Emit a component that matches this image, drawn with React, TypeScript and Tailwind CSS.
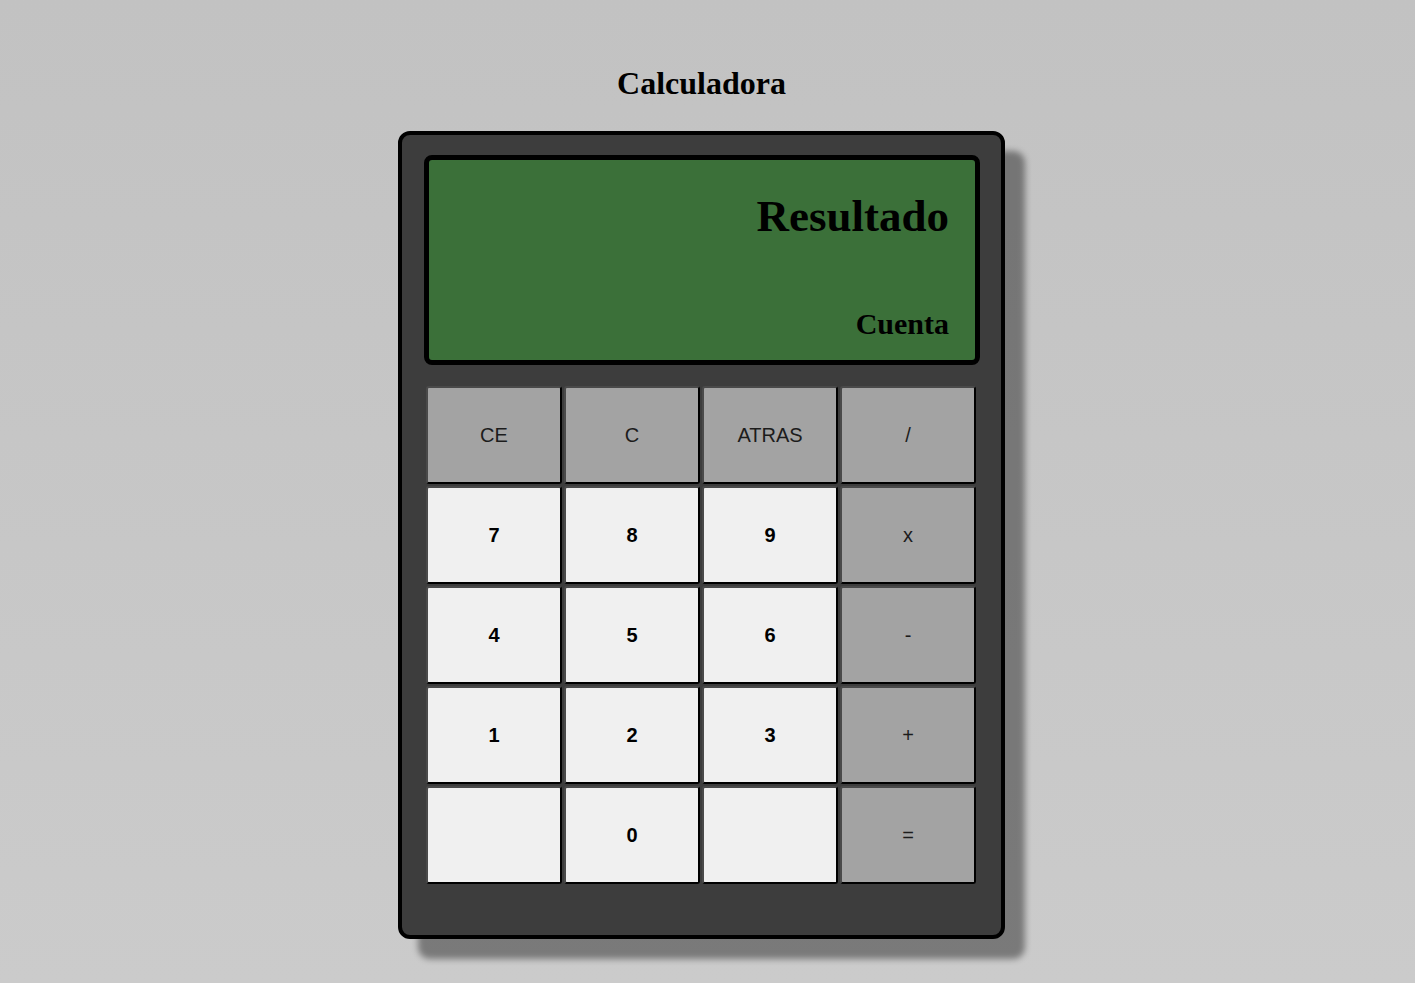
const teclas = [
  { t: 'CE', op: true, bold: false },
  { t: 'C', op: true, bold: false },
  { t: 'ATRAS', op: true, bold: false },
  { t: '/', op: true, bold: false },
  { t: '7', op: false, bold: true },
  { t: '8', op: false, bold: true },
  { t: '9', op: false, bold: true },
  { t: 'x', op: true, bold: false },
  { t: '4', op: false, bold: true },
  { t: '5', op: false, bold: true },
  { t: '6', op: false, bold: true },
  { t: '-', op: true, bold: false },
  { t: '1', op: false, bold: true },
  { t: '2', op: false, bold: true },
  { t: '3', op: false, bold: true },
  { t: '+', op: true, bold: false },
  { t: '', op: false, bold: true },
  { t: '0', op: false, bold: true },
  { t: '', op: false, bold: true },
  { t: '=', op: true, bold: false },
];

export default function App() {
  return (
    <div className="min-h-screen w-full bg-gradient-to-b from-[#c2c2c2] to-[#cbcbcb] flex flex-col items-center pt-[65px] pr-[12px] font-['Liberation_Serif',serif]">
      <h1 className="text-[32px] leading-[36px] font-bold text-black">Calculadora</h1>

      <div className="mt-[30px] w-[607px] h-[808px] bg-[#3d3d3d] border-4 border-black rounded-[12px] shadow-[20px_20px_6px_rgba(0,0,0,0.4)] flex flex-col pt-[20px]">
        {/* pantalla */}
        <div className="ml-[22px] w-[556px] h-[210px] bg-[#3b7039] border-[5px] border-black rounded-[8px] flex flex-col items-end pr-[26px] pt-[34px]">
          <div className="text-[45px] leading-[45px] font-bold text-black">Resultado</div>
          <div className="mt-[70px] text-[30px] leading-[30px] font-bold text-black">Cuenta</div>
        </div>

        <div className="mt-[21px] ml-[24px] grid grid-cols-[repeat(4,136px)] auto-rows-[98px] gap-[2px] font-['Liberation_Sans',Arial,sans-serif]">
          {teclas.map((k, i) => (
            <button
              key={i}
              className={
                'flex items-center justify-center rounded-[3px] border-2 border-t-[#4a4a4a] border-l-[#4a4a4a] border-r-black border-b-black text-[20px] ' +
                (k.op ? 'bg-[#a3a3a3] text-[#1c1c1c] ' : 'bg-[#f0f0f0] text-black ') +
                (k.bold ? 'font-bold' : 'font-normal')
              }
            >
              {k.t}
            </button>
          ))}
        </div>
      </div>
    </div>
  );
}
